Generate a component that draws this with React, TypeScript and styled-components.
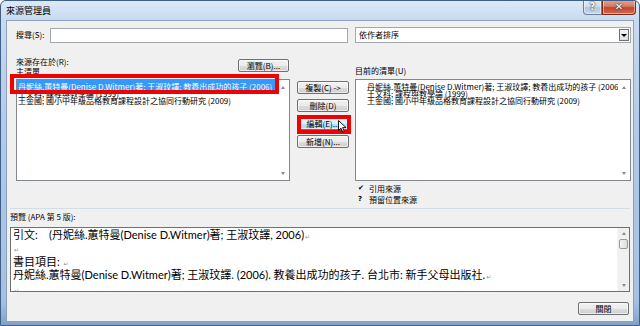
import React from 'react';
import styled, { createGlobalStyle } from 'styled-components';

const UI = `"Noto Sans CJK TC", "Liberation Sans", sans-serif`;
const PV = `Lato, "Noto Sans CJK TC", sans-serif`;

const Global = createGlobalStyle`
  html, body { margin: 0; padding: 0; background: #ffffff; }
  body { width: 640px; height: 326px; overflow: hidden; font-family: ${UI}; }
  * { box-sizing: border-box; }
`;

const Window = styled.div`
  position: relative;
  width: 640px;
  height: 326px;
  display: flex;
  flex-direction: column;
  border: 1px solid #3f5f86;
  border-radius: 6px 6px 0 0;
  overflow: hidden;
  background: linear-gradient(180deg, #dce9f7 0px, #c6daf0 20px, #b1cbe8 120px, #a5c1e2 300px, #7f9fc6 326px);
`;

const TitleBar = styled.div`
  height: 19px;
  display: flex;
  align-items: flex-start;
`;

const Title = styled.div`
  padding-left: 5px;
  font: 9px/19px ${UI};
  color: #000;
`;

const CaptionBtn = styled.div<{ $close?: boolean }>`
  width: ${(p) => (p.$close ? 34 : 19)}px;
  height: 15px;
  margin-top: -1px;
  display: flex;
  align-items: center;
  justify-content: center;
  border: 1px solid ${(p) => (p.$close ? '#7a2a1c' : '#6b7f98')};
  border-top: none;
  border-radius: ${(p) => (p.$close ? '0 0 4px 0' : '0 0 0 4px')};
  background: ${(p) =>
    p.$close
      ? 'linear-gradient(180deg, #e8a493 0%, #d47a66 45%, #c2452d 55%, #d16a50 100%)'
      : 'linear-gradient(180deg, #e6eef8 0%, #cfdcec 45%, #b5c7de 55%, #c7d7ea 100%)'};
  box-shadow: inset 0 0 0 1px rgba(255, 255, 255, 0.45);
  color: #fff;
  font: bold 10px/1 "DejaVu Sans", sans-serif;
  text-shadow: 0 0 2px #333, 0 0 1px #333;
`;

const Captions = styled.div`
  margin-left: auto;
  margin-right: 3px;
  display: flex;
`;

const Client = styled.div`
  flex: 1;
  margin: 0 5px 3px 5px;
  border: 1px solid #8aa0bb;
  background: #f0f0f0;
  display: flex;
  flex-direction: column;
  font: 8px/10px ${UI};
  color: #000;
`;

const SearchRow = styled.div`
  margin-top: 6px;
  padding-left: 9px;
  height: 16px;
  display: flex;
  align-items: center;
`;

const Label = styled.span`
  white-space: nowrap;
`;

const SearchLabel = styled(Label)`
  width: 34px;
`;

const TextBox = styled.div`
  width: 298px;
  height: 15px;
  background: #fff;
  border: 1px solid #a3a7ae;
`;

const Combo = styled.div`
  margin-left: 7px;
  width: 276px;
  height: 16px;
  background: #fff;
  border: 1px solid #a3a7ae;
  display: flex;
  align-items: center;
  padding: 0 1px 0 3px;
`;

const ComboText = styled.span`
  flex: 1;
`;

const ComboArrow = styled.div`
  width: 10px;
  height: 12px;
  border: 1px solid #707070;
  background: linear-gradient(#f4f4f4, #dedede);
  display: flex;
  align-items: center;
  justify-content: center;
  &::after {
    content: '';
    border-left: 3px solid transparent;
    border-right: 3px solid transparent;
    border-top: 3px solid #000;
  }
`;

const MainGrid = styled.div`
  margin-top: 14px;
  padding-left: 9px;
  display: grid;
  grid-template-columns: 274px 53px 276px;
  column-gap: 6px;
`;

const Column = styled.div`
  display: flex;
  flex-direction: column;
`;

const ColHeader = styled.div<{ $bottom?: boolean }>`
  height: 22px;
  display: flex;
  justify-content: space-between;
  align-items: flex-start;
  padding-top: ${(p) => (p.$bottom ? 9 : 0)}px;
`;

const LabelStack = styled.div`
  display: flex;
  flex-direction: column;
  line-height: 10px;
`;

const Btn = styled.div<{ $hover?: boolean; $w?: number }>`
  width: ${(p) => p.$w ?? 52}px;
  height: 13px;
  border: 1px solid ${(p) => (p.$hover ? '#3c7fb1' : '#707070')};
  border-radius: 2px;
  background: ${(p) =>
    p.$hover
      ? 'linear-gradient(180deg, #eaf6fd 0%, #d9f0fc 50%, #bee6fd 51%, #a7d9f5 100%)'
      : 'linear-gradient(180deg, #f2f2f2 0%, #ebebeb 50%, #dddddd 51%, #cfcfcf 100%)'};
  box-shadow: inset 0 0 0 1px rgba(255, 255, 255, 0.6);
  display: flex;
  align-items: center;
  justify-content: center;
  font: 8px/11px ${UI};
  white-space: nowrap;
  color: #000;
`;

const BrowseBtn = styled(Btn)`
  margin-top: 2px;
  margin-right: 1px;
`;

const ListWrap = styled.div`
  position: relative;
  height: 102px;
`;

const ListBox = styled.div`
  height: 100%;
  background: #fff;
  border: 1px solid #828790;
  display: flex;
  overflow: hidden;
`;

const ListItems = styled.div<{ $indent?: number }>`
  flex: 1;
  min-width: 0;
  padding-top: 3px;
  padding-left: ${(p) => p.$indent ?? 0}px;
  overflow: hidden;
`;

const Item = styled.div<{ $selected?: boolean }>`
  height: 7px;
  line-height: 7px;
  white-space: nowrap;
  overflow: visible;
  padding-left: 1px;
  ${(p) =>
    p.$selected
      ? `background: #3399ff; color: #fff; height: 10px; padding-top: 3px; margin-top: -3px;`
      : ''}
`;

const VScroll = styled.div`
  width: 12px;
  display: flex;
  flex-direction: column;
  justify-content: space-between;
`;

const ArrowBtn = styled.div<{ $down?: boolean; $h?: number }>`
  height: ${(p) => p.$h ?? 14}px;
  display: flex;
  align-items: center;
  justify-content: center;
  &::after {
    content: '';
    border-left: 2.5px solid transparent;
    border-right: 2.5px solid transparent;
    ${(p) => (p.$down ? 'border-top: 3px solid #8a8a8a;' : 'border-bottom: 3px solid #8a8a8a;')}
  }
`;

const RedFrame = styled.div<{ $l: number; $t: number; $w: number; $h: number }>`
  position: absolute;
  left: ${(p) => p.$l}px;
  top: ${(p) => p.$t}px;
  width: ${(p) => p.$w}px;
  height: ${(p) => p.$h}px;
  border: 4px solid #f00000;
  pointer-events: none;
`;

const MidCol = styled.div`
  padding-top: 24px;
  display: flex;
  flex-direction: column;
  align-items: flex-end;
  gap: 5px;
`;

const EditWrap = styled.div`
  position: relative;
`;

const Cursor = styled.svg`
  position: absolute;
  left: 41px;
  top: 3px;
`;

const Legend = styled.div`
  margin-top: 2px;
  padding-left: 3px;
  display: flex;
  flex-direction: column;
`;

const LegendRow = styled.div`
  height: 11px;
  line-height: 11px;
  display: flex;
  align-items: center;
`;

const LegendMark = styled.span`
  width: 11px;
  font: bold 7px/11px "DejaVu Sans", sans-serif;
`;

const Separator = styled.div`
  margin: 3px 3px 0 3px;
  height: 1px;
  background: #d2dde6;
`;

const PreviewLabel = styled.div`
  margin-top: 3px;
  padding-left: 3px;
  line-height: 10px;
`;

const PreviewBox = styled.div`
  margin: 5px 3px 0 3px;
  height: 65px;
  background: #fff;
  border: 1px solid #707070;
  display: flex;
`;

const PreviewText = styled.div`
  flex: 1;
  padding-left: 2px;
  font: 11px/13.4px ${PV};
  color: #000;
  overflow: hidden;
`;

const Para = styled.div`
  white-space: nowrap;
  height: 13.4px;
`;

const Ret = styled.span`
  font: 6px/1 "DejaVu Sans", sans-serif;
  color: #909090;
  margin-left: 1px;
`;

const PScroll = styled.div`
  width: 12px;
  background: #f0f0f0;
  border-left: 1px solid #f4f4f4;
  display: flex;
  flex-direction: column;
  padding: 1px 1px;
`;

const Thumb = styled.div`
  margin-top: 1px;
  height: 10px;
  border: 1px solid #9a9a9a;
  border-radius: 2px;
  background: linear-gradient(90deg, #f4f4f4, #dcdcdc);
`;

const Spacer = styled.div`
  flex: 1;
`;

const Footer = styled.div`
  margin-top: 10px;
  padding-right: 4px;
  display: flex;
  justify-content: flex-end;
`;

const R = () => <Ret>↵</Ret>;

export default function App() {
  return (
    <>
      <Global />
      <Window>
        <TitleBar>
          <Title>來源管理員</Title>
          <Captions>
            <CaptionBtn>?</CaptionBtn>
            <CaptionBtn $close>✕</CaptionBtn>
          </Captions>
        </TitleBar>
        <Client>
          <SearchRow>
            <SearchLabel>搜尋(S):</SearchLabel>
            <TextBox />
            <Combo>
              <ComboText>依作者排序</ComboText>
              <ComboArrow />
            </Combo>
          </SearchRow>

          <MainGrid>
            <Column>
              <ColHeader>
                <LabelStack>
                  <Label>來源存在於(R):</Label>
                  <Label>主清單</Label>
                </LabelStack>
                <BrowseBtn $w={51}>瀏覽(B)...</BrowseBtn>
              </ColHeader>
              <ListWrap>
                <ListBox>
                  <ListItems>
                    <Item $selected>丹妮絲.蕙特曼(Denise D.Witmer)著; 王淑玟譯; 教養出成功的孩子 (2006)</Item>
                    <Item>王文科; 課程與教學論 (1999)</Item>
                    <Item>王金國; 國小中年級品格教育課程設計之協同行動研究 (2009)</Item>
                  </ListItems>
                  <VScroll>
                    <ArrowBtn />
                    <ArrowBtn $down />
                  </VScroll>
                </ListBox>
                <RedFrame $l={-6} $t={-5} $w={269} $h={20} />
              </ListWrap>
            </Column>

            <MidCol>
              <Btn>複製(C) -&gt;</Btn>
              <Btn>刪除(D)</Btn>
              <EditWrap>
                <Btn $hover>編輯(E)...</Btn>
                <RedFrame $l={0} $t={-2} $w={54} $h={19} />
                <Cursor width="10" height="13" viewBox="0 0 10 13">
                  <path d="M0.5 0.5 L0.5 10.5 L3 8.2 L4.8 12.2 L6.3 11.5 L4.6 7.6 L8 7.6 Z" fill="#fff" stroke="#000" strokeWidth="0.9" strokeLinejoin="round" />
                </Cursor>
              </EditWrap>
              <Btn>新增(N)...</Btn>
            </MidCol>

            <Column>
              <ColHeader $bottom>
                <Label>目前的清單(U)</Label>
              </ColHeader>
              <ListWrap>
                <ListBox>
                  <ListItems $indent={10}>
                    <Item>丹妮絲.蕙特曼(Denise D.Witmer)著; 王淑玟譯; 教養出成功的孩子 (2006)</Item>
                    <Item>王文科; 課程與教學論 (1999)</Item>
                    <Item>王金國; 國小中年級品格教育課程設計之協同行動研究 (2009)</Item>
                  </ListItems>
                  <VScroll>
                    <ArrowBtn />
                    <ArrowBtn $down />
                  </VScroll>
                </ListBox>
              </ListWrap>
              <Legend>
                <LegendRow>
                  <LegendMark>✔</LegendMark>
                  <Label>引用來源</Label>
                </LegendRow>
                <LegendRow>
                  <LegendMark>?</LegendMark>
                  <Label>預留位置來源</Label>
                </LegendRow>
              </Legend>
            </Column>
          </MainGrid>

          <Separator />
          <PreviewLabel>預覽 (APA 第 5 版):</PreviewLabel>
          <PreviewBox>
            <PreviewText>
              <Para>引文:&nbsp;&nbsp;&nbsp; (丹妮絲.蕙特曼(Denise D.Witmer)著; 王淑玟譯, 2006)<R /></Para>
              <Para><R /></Para>
              <Para>書目項目: <R /></Para>
              <Para>丹妮絲.蕙特曼(Denise D.Witmer)著; 王淑玟譯. (2006). 教養出成功的孩子. 台北市: 新手父母出版社.<R /></Para>
              <Para><R /></Para>
            </PreviewText>
            <PScroll>
              <ArrowBtn $h={9} />
              <Thumb />
              <Spacer />
              <ArrowBtn $down $h={9} />
            </PScroll>
          </PreviewBox>
          <Footer>
            <Btn $w={51}>關閉</Btn>
          </Footer>
        </Client>
      </Window>
    </>
  );
}
